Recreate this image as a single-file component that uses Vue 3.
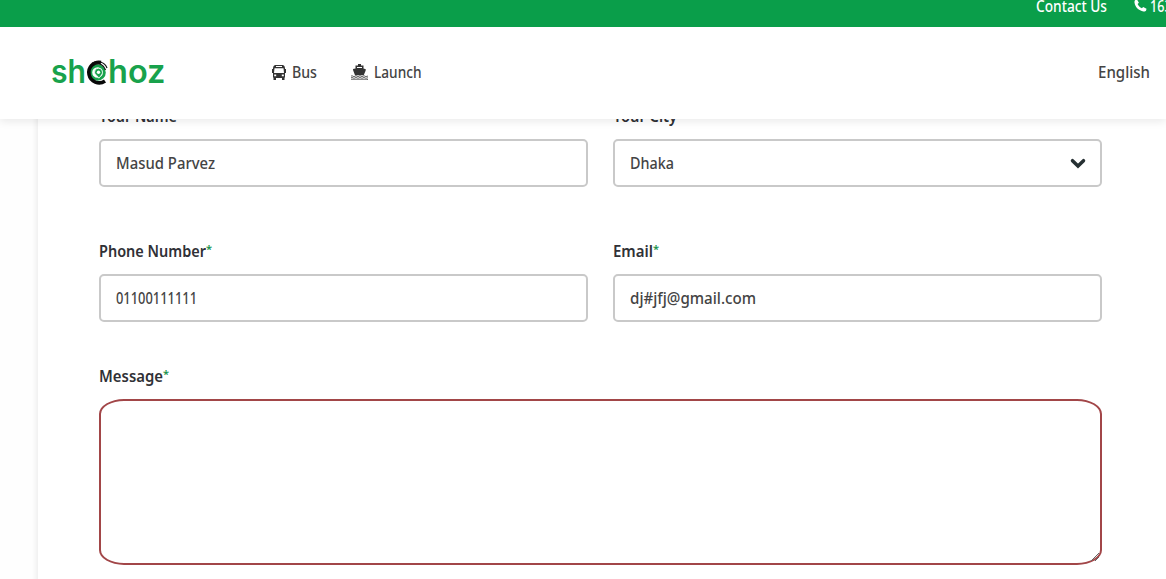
<script setup>
import { h } from 'vue'

// Text condensed to a set advance width; baseline sits 15px below the top.
const FitText = ({ text, width }) =>
  h('svg', { width, height: 20, class: 'fit-text' }, [
    h('text', { x: 0, y: 15, textLength: width, lengthAdjust: 'spacingAndGlyphs' }, text),
  ])
FitText.props = ['text', 'width']

const rows = [
  [
    { label: 'Your Name', lw: 78, value: 'Masud Parvez', vw: 99 },
    { label: 'Your City', lw: 64, value: 'Dhaka', vw: 44, select: true },
  ],
  [
    { label: 'Phone Number', lw: 107, required: true, value: '01100111111', vw: 81 },
    { label: 'Email', lw: 40, required: true, value: 'dj#jfj@gmail.com', vw: 126 },
  ],
]
</script>

<template>
  <div class="page">
    <div class="topbar">
      <FitText text="Contact Us" :width="71" />
      <svg class="phone" width="13" height="13" viewBox="0 0 13 13">
        <path d="M3 .5 4.9 3.7 3.6 5.1C4.4 7 5.9 8.5 7.9 9.3L9.2 8l3.3 1.8-.4 1.7c-.4.7-1.6 1.2-2.6 1C4.8 11.8 1.1 8.2.5 3.6.3 2.5.8 1.3 1.5.9Z" />
      </svg>
      <FitText text="16374" :width="36" />
    </div>

    <header class="header">
      <svg class="logo" width="114" height="34" viewBox="0 0 114 34">
        <text x="0" y="27" textLength="35" lengthAdjust="spacingAndGlyphs">sh</text>
        <text x="57" y="27" textLength="57.500" lengthAdjust="spacingAndGlyphs">hoz</text>
        <circle cx="46.500" cy="16.500" r="6.800" class="green-ring" />
        <path class="black-ring" d="M50 6.400A10.300 10.300 0 1 0 54 25" />
        <path class="thin-ring" d="M41 7.200C47 3.800 54 6.500 56 12M43 8.200C48 6.500 53 9 54.500 14" />
        <path class="pin" d="M47.500 12.200a4 4 0 0 1 4 4c0 2-1.500 3.500-3.700 6-.8-2.500-4.300-3.500-4.300-6a4 4 0 0 1 4-4Z" />
        <circle cx="47.500" cy="16.200" r="1.700" class="pin-dot" />
      </svg>
      <div class="nav bus">
        <svg width="14" height="15" viewBox="0 0 14 15">
          <path fill-rule="evenodd" d="M3 0h8q1.800.3 2 3v1h1v4h-1v4.500h-.5V15h-2.500v-2h-6v2H1.500v-2.500H1V8H0V4h1V3Q1.200.3 3 0ZM4 1v1h6V1ZM2.500 3.200 2 8h10l-.5-4.800ZM2.200 9.500v1.700h2V9.500ZM9.800 9.500v1.700h2V9.500Z" />
        </svg>
        <FitText text="Bus" :width="25" />
      </div>
      <div class="nav launch">
        <svg width="17" height="16" viewBox="0 0 17 16">
          <path d="M7 0h3v1.500h2.500v3l2.300.7-.2 1.500-1.900 4.600H4L2.200 6.600 2 5.100l2.500-.6v-3H7Z" />
          <path class="deck" d="M6 3.500h5" />
          <path class="waves" d="M0 12.200q1-1 2 0t2 0 2 0 2 0 2 0 2 0 2 0 2 0h1M0 13.900q1-1 2 0t2 0 2 0 2 0 2 0 2 0 2 0 2 0h1M0 15.500q1-1 2 0t2 0 2 0 2 0 2 0 2 0 2 0 2 0h1" />
        </svg>
        <FitText text="Launch" :width="47.500" />
      </div>
      <FitText class="language" text="English" :width="52" />
    </header>

    <main class="card">
      <div v-for="(row, i) in rows" :key="i" class="row">
        <div v-for="field in row" :key="field.label" class="field">
          <div class="label">
            <FitText :text="field.label" :width="field.lw" />
            <span v-if="field.required" class="star">*</span>
          </div>
          <div class="control">
            <FitText :text="field.value" :width="field.vw" />
            <svg v-if="field.select" class="chevron" width="16" height="11" viewBox="0 0 16 11">
              <path d="m2.500 2.700 5.500 5.300 5.500-5.300" />
            </svg>
          </div>
        </div>
      </div>
      <div class="label">
        <FitText text="Message" :width="64" />
        <span class="star">*</span>
      </div>
      <div class="message">
        <svg class="grip" width="9" height="9" viewBox="0 0 9 9">
          <path d="M0 8 8 0M4 8l4-4" />
        </svg>
      </div>
    </main>
  </div>
</template>

<style>
body {
  background: #fff;
  overflow: hidden;
}
</style>

<style scoped>
.page {
  height: 579px;
  overflow: hidden;
  background: #fefefe;
  font: 16px "Noto Sans", sans-serif;
  color: #444;
}
.fit-text {
  display: block;
  flex: none;
  overflow: visible;
  fill: currentColor;
}
.topbar {
  position: relative;
  z-index: 3;
  box-sizing: border-box;
  height: 27px;
  padding-left: 1035.5px;
  display: flex;
  overflow: hidden;
  background: #0a9e4a;
  color: #fff;
  font-weight: 500;
}
.topbar .fit-text {
  margin-top: -3px;
}
.phone {
  flex: none;
  margin: -1px 3px 0 27px;
  fill: #fff;
}
.header {
  position: relative;
  z-index: 2;
  box-sizing: border-box;
  height: 92px;
  padding: 0 16px 0 51px;
  display: flex;
  align-items: center;
  background: #fff;
  box-shadow: 0 3px 8px rgba(0, 0, 0, 0.08);
  font-weight: 500;
}
.logo {
  flex: none;
  overflow: visible;
}
.logo text {
  font: 600 32px Inter, sans-serif;
  fill: #18a24c;
}
.green-ring {
  fill: none;
  stroke: #18a24c;
  stroke-width: 3;
}
.black-ring {
  fill: none;
  stroke: #080808;
  stroke-width: 3.6;
}
.thin-ring {
  fill: none;
  stroke: #111;
  stroke-width: 1.2;
}
.pin {
  fill: #18a24c;
  stroke: #fff;
  stroke-width: 0.8;
}
.pin-dot {
  fill: #fff;
}
.nav {
  display: flex;
  align-items: center;
  fill: #333;
}
.nav > svg:first-child {
  margin-top: -2px;
}
.bus {
  margin-left: 107px;
  gap: 6px;
}
.launch {
  margin-left: 34px;
  gap: 6px;
}
.deck {
  fill: none;
  stroke: #fff;
}
.waves {
  fill: none;
  stroke: #555;
  stroke-width: 0.9;
}
.language {
  margin-left: auto;
}
.card {
  box-sizing: border-box;
  height: 520px;
  margin: -12px 0 0 38px;
  padding: 0 64px 0 61px;
  background: #fff;
  box-shadow: -2px 0 5px rgba(0, 0, 0, 0.07);
}
.row {
  display: grid;
  grid-template-columns: 489px 489px;
  gap: 25px;
  height: 135px;
}
.row + .row {
  height: 125px;
}
.label {
  display: flex;
  height: 32px;
  color: #303136;
  font-weight: 600;
}
.star {
  margin-top: 1px;
  font-size: 11px;
  line-height: 12px;
  color: #16924a;
}
.control {
  box-sizing: border-box;
  height: 48px;
  padding: 2px 15px 0;
  display: flex;
  align-items: center;
  border: 2px solid #c9c9c9;
  border-radius: 5px;
  background: #fff;
  font-weight: 500;
}
.chevron {
  margin: -1px -1px 0 auto;
  fill: none;
  stroke: #263033;
  stroke-width: 3.5;
  stroke-linecap: round;
}
.message {
  position: relative;
  box-sizing: border-box;
  height: 166px;
  border: 2px solid #a24648;
  border-radius: 25px / 15px;
}
.grip {
  position: absolute;
  right: 0;
  bottom: 1px;
  fill: none;
  stroke: #666;
}
</style>
